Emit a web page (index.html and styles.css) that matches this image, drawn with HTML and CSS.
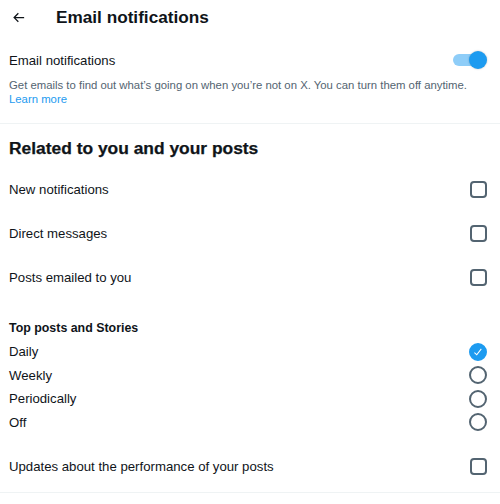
FILE: index.html
```html
<!DOCTYPE html>
<html>
<head>
<meta charset="utf-8">
<link rel="stylesheet" href="styles.css">
</head>
<body>
<div class="page">
  <header class="header">
    <span class="back">
      <svg viewBox="0 0 24 24" width="15" height="15"><path d="M7.414 13l5.043 5.04-1.414 1.42L3.586 12l7.457-7.46 1.414 1.42L7.414 11H21v2H7.414z" fill="#0f1419"/></svg>
    </span>
    <h1 class="title">Email notifications</h1>
  </header>

  <section class="intro">
    <div class="row toggle-row">
      <span class="label">Email notifications</span>
      <span class="toggle"><span class="track"></span><span class="knob"></span></span>
    </div>
    <p class="desc">Get emails to find out what’s going on when you’re not on X. You can turn them off anytime.<br><a class="link">Learn more</a></p>
  </section>

  <section class="group">
    <h2 class="heading">Related to you and your posts</h2>
    <div class="row check-row"><span class="label">New notifications</span><span class="box"></span></div>
    <div class="row check-row"><span class="label">Direct messages</span><span class="box"></span></div>
    <div class="row check-row"><span class="label">Posts emailed to you</span><span class="box"></span></div>

    <div class="subgroup">
      <div class="subheading">Top posts and Stories</div>
      <div class="row radio-row"><span class="label">Daily</span><span class="radio checked"><svg viewBox="0 0 24 24" width="12" height="12"><path d="M9.64 18.952l-5.55-4.861 1.317-1.504 3.951 3.459 8.459-10.948L19.4 6.32 9.64 18.952z" fill="#fff"/></svg></span></div>
      <div class="row radio-row"><span class="label">Weekly</span><span class="radio"></span></div>
      <div class="row radio-row"><span class="label">Periodically</span><span class="radio"></span></div>
      <div class="row radio-row"><span class="label">Off</span><span class="radio"></span></div>
    </div>

    <div class="row check-row"><span class="label">Updates about the performance of your posts</span><span class="box"></span></div>
  </section>
</div>
</body>
</html>
```

FILE: styles.css
```css
* { box-sizing: border-box; }
html, body { margin: 0; padding: 0; background: #fff; }
body {
  font-family: "Liberation Sans", Arial, sans-serif;
  color: #0f1419;
  width: 500px;
  height: 504px;
  overflow: hidden;
}
.page { display: flex; flex-direction: column; }
.header {
  display: flex;
  align-items: center;
  height: 34px;
  padding: 0 8px 0 10px;
}
.back { width: 46px; height: 34px; display: flex; align-items: center; padding-left: 1px; }
.title {
  margin: 0;
  font-size: 17.2px;
  font-weight: 700;
}
.intro {
  padding: 17px 13px 17px 9px;
  border-bottom: 1px solid #eff3f4;
}
.row {
  display: flex;
  align-items: center;
  justify-content: space-between;
}
.label { font-size: 13.2px; color: #0f1419; }
.toggle-row { height: 18px; }
.toggle { position: relative; width: 34px; height: 18px; }
.track {
  position: absolute; left: 0; top: 3px;
  width: 28px; height: 12px; border-radius: 6px;
  background: #8ecdf8;
}
.knob {
  position: absolute; right: 0; top: 0;
  width: 18px; height: 18px; border-radius: 50%;
  background: #1d9bf0;
  box-shadow: 0 0 2px rgba(0,0,0,0.25);
}
.desc {
  margin: 9px 0 0;
  font-size: 11.35px;
  line-height: 14px;
  color: #536471;
  white-space: nowrap;
}
.link { color: #1d9bf0; }
.group { padding: 0 13px 4px 9px; border-bottom: 1px solid #eff3f4; }
.heading {
  margin: 0;
  font-size: 17.4px;
  font-weight: 700;
  height: 43px;
  padding-top: 12px;
  line-height: 24px;
  -webkit-text-stroke: 0.25px #0f1419;
}
.check-row { height: 44px; }
.box {
  width: 17px; height: 17px;
  border: 2px solid #536471;
  border-radius: 4px;
}
.subgroup { padding-top: 17px; padding-bottom: 10px; }
.subheading { font-size: 12.4px; font-weight: 700; height: 24px; line-height: 24px; }
.radio-row { height: 23.5px; }
.radio {
  width: 18px; height: 18px; border-radius: 50%;
  border: 2px solid #536471;
  display: flex; align-items: center; justify-content: center;
}
.radio.checked { background: #1d9bf0; border-color: #1d9bf0; }
```
